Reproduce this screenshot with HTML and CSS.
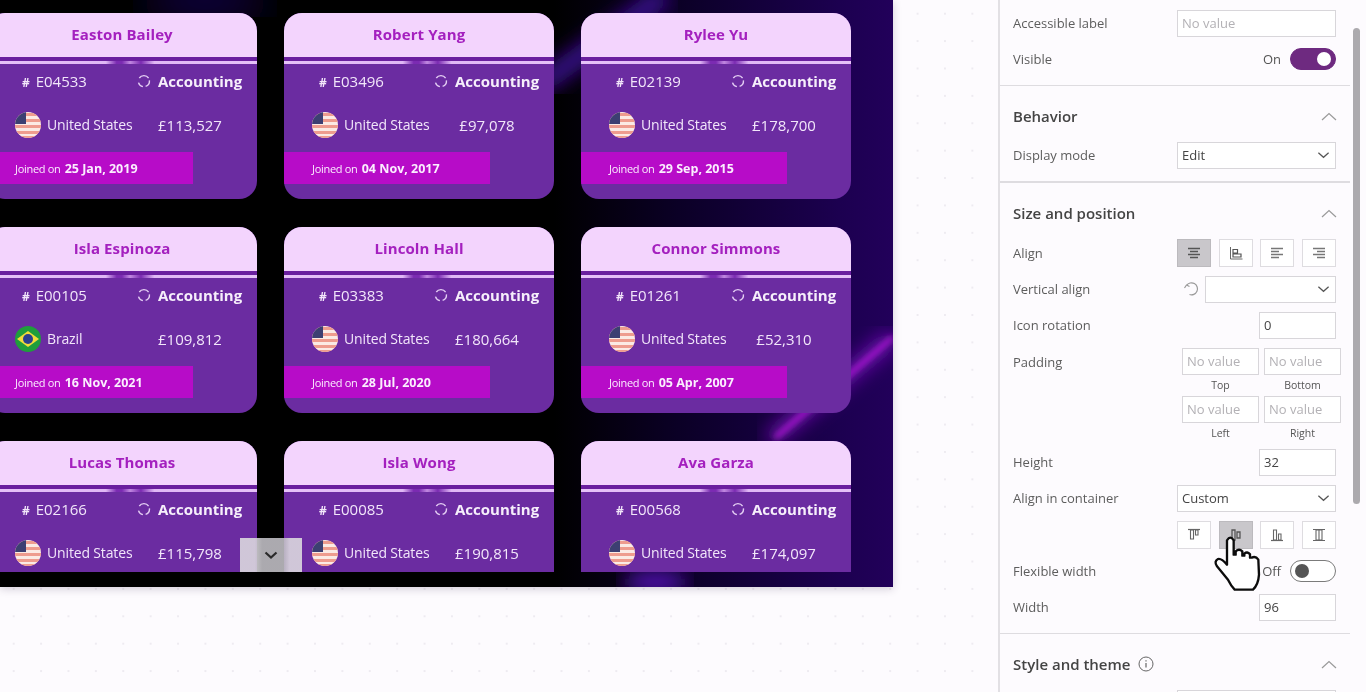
FILE: index.html
```html
<!DOCTYPE html>
<html lang="en">
<head>
<meta charset="utf-8">
<title>Employee cards</title>
<link rel="stylesheet" href="styles.css">
</head>
<body>
<svg class="defs" width="0" height="0" aria-hidden="true">
  <defs>
    <clipPath id="disc"><circle cx="13" cy="13" r="13"/></clipPath>
    <symbol id="us" viewBox="0 0 26 26">
      <g clip-path="url(#disc)">
        <rect width="26" height="26" fill="#fbeae4"/>
        <rect y="1" width="26" height="3" fill="#ee9c8e"/>
        <rect y="7" width="26" height="3" fill="#ee9c8e"/>
        <rect y="13" width="26" height="3" fill="#ee9c8e"/>
        <rect y="19" width="26" height="3" fill="#ee9c8e"/>
        <rect y="24" width="26" height="2" fill="#ee9c8e"/>
        <rect width="11" height="12" fill="#3c3f72"/>
      </g>
    </symbol>
    <symbol id="br" viewBox="0 0 26 26">
      <g clip-path="url(#disc)">
        <rect width="26" height="26" fill="#1f9e3c"/>
        <path d="M13 5 24 13 13 21 2 13Z" fill="#f2dc3a"/>
        <circle cx="13" cy="13" r="5" fill="#2c3f8f"/>
      </g>
    </symbol>
    <symbol id="spin" viewBox="0 0 14 14">
      <path d="M11.6 4.2A5.6 5.6 0 0 0 2.3 4M1.5 8.6a5.6 5.6 0 0 0 4.4 4M8.6 12.4a5.6 5.6 0 0 0 3.8-6" fill="none" stroke="#e3cdf3" stroke-width="1.4"/>
    </symbol>
    <symbol id="chev" viewBox="0 0 14 8">
      <path d="M1.5 1.5 7 6.5 12.5 1.5" fill="none" stroke="#555" stroke-width="1.3"/>
    </symbol>
    <symbol id="chevbold" viewBox="0 0 14 8">
      <path d="M1.5 1.5 7 6.5 12.5 1.5" fill="none" stroke="#2a2a2a" stroke-width="2.2"/>
    </symbol>
    <symbol id="chevup" viewBox="0 0 16 9">
      <path d="M1 8 8 1.5 15 8" fill="none" stroke="#9a9a9a" stroke-width="1.2"/>
    </symbol>
  </defs>
</svg>

<div class="app">
  <main class="stage">
    <section class="canvas">
      <svg class="glow" viewBox="0 0 893 587" preserveAspectRatio="none" aria-hidden="true">
        <defs>
          <filter id="b3"><feGaussianBlur stdDeviation="3"/></filter>
          <filter id="b10"><feGaussianBlur stdDeviation="10"/></filter>
          <filter id="b22"><feGaussianBlur stdDeviation="22"/></filter>
        </defs>
        <path d="M540 85 665 -5" stroke="#3e0e96" stroke-width="20" filter="url(#b10)"/>
        <path d="M893 337 770 440" stroke="#8a18d0" stroke-width="12" filter="url(#b10)"/>
        <path d="M893 337 775 438" stroke="#c31ee6" stroke-width="4" filter="url(#b3)"/>
        <ellipse cx="655" cy="582" rx="32" ry="10" fill="#5a12c0" filter="url(#b10)"/>
        <ellipse cx="205" cy="0" rx="60" ry="14" fill="#1c0a66" filter="url(#b22)"/>
      </svg>
      <div class="grid">

        <article class="card">
          <h2 class="name">Easton Bailey</h2>
          <div class="rule"></div>
          <div class="row-a"><span class="id"><i>#</i> E04533</span><svg class="spin"><use href="#spin"/></svg><b class="dept">Accounting</b></div>
          <div class="row-b"><span class="place"><svg class="flag"><use href="#us"/></svg>United States</span><span class="pay">£113,527</span></div>
          <div class="joined"><small>Joined on</small> <b>25 Jan, 2019</b></div>
        </article>
        <article class="card">
          <h2 class="name">Robert Yang</h2>
          <div class="rule"></div>
          <div class="row-a"><span class="id"><i>#</i> E03496</span><svg class="spin"><use href="#spin"/></svg><b class="dept">Accounting</b></div>
          <div class="row-b"><span class="place"><svg class="flag"><use href="#us"/></svg>United States</span><span class="pay">£97,078</span></div>
          <div class="joined"><small>Joined on</small> <b>04 Nov, 2017</b></div>
        </article>
        <article class="card">
          <h2 class="name">Rylee Yu</h2>
          <div class="rule"></div>
          <div class="row-a"><span class="id"><i>#</i> E02139</span><svg class="spin"><use href="#spin"/></svg><b class="dept">Accounting</b></div>
          <div class="row-b"><span class="place"><svg class="flag"><use href="#us"/></svg>United States</span><span class="pay">£178,700</span></div>
          <div class="joined"><small>Joined on</small> <b>29 Sep, 2015</b></div>
        </article>

        <article class="card">
          <h2 class="name">Isla Espinoza</h2>
          <div class="rule"></div>
          <div class="row-a"><span class="id"><i>#</i> E00105</span><svg class="spin"><use href="#spin"/></svg><b class="dept">Accounting</b></div>
          <div class="row-b"><span class="place"><svg class="flag"><use href="#br"/></svg>Brazil</span><span class="pay">£109,812</span></div>
          <div class="joined"><small>Joined on</small> <b>16 Nov, 2021</b></div>
        </article>
        <article class="card">
          <h2 class="name">Lincoln Hall</h2>
          <div class="rule"></div>
          <div class="row-a"><span class="id"><i>#</i> E03383</span><svg class="spin"><use href="#spin"/></svg><b class="dept">Accounting</b></div>
          <div class="row-b"><span class="place"><svg class="flag"><use href="#us"/></svg>United States</span><span class="pay">£180,664</span></div>
          <div class="joined"><small>Joined on</small> <b>28 Jul, 2020</b></div>
        </article>
        <article class="card">
          <h2 class="name">Connor Simmons</h2>
          <div class="rule"></div>
          <div class="row-a"><span class="id"><i>#</i> E01261</span><svg class="spin"><use href="#spin"/></svg><b class="dept">Accounting</b></div>
          <div class="row-b"><span class="place"><svg class="flag"><use href="#us"/></svg>United States</span><span class="pay">£52,310</span></div>
          <div class="joined"><small>Joined on</small> <b>05 Apr, 2007</b></div>
        </article>

        <article class="card">
          <h2 class="name">Lucas Thomas</h2>
          <div class="rule"></div>
          <div class="row-a"><span class="id"><i>#</i> E02166</span><svg class="spin"><use href="#spin"/></svg><b class="dept">Accounting</b></div>
          <div class="row-b"><span class="place"><svg class="flag"><use href="#us"/></svg>United States</span><span class="pay">£115,798</span></div>
        </article>
        <article class="card">
          <h2 class="name">Isla Wong</h2>
          <div class="rule"></div>
          <div class="row-a"><span class="id"><i>#</i> E00085</span><svg class="spin"><use href="#spin"/></svg><b class="dept">Accounting</b></div>
          <div class="row-b"><span class="place"><svg class="flag"><use href="#us"/></svg>United States</span><span class="pay">£190,815</span></div>
        </article>
        <article class="card">
          <h2 class="name">Ava Garza</h2>
          <div class="rule"></div>
          <div class="row-a"><span class="id"><i>#</i> E00568</span><svg class="spin"><use href="#spin"/></svg><b class="dept">Accounting</b></div>
          <div class="row-b"><span class="place"><svg class="flag"><use href="#us"/></svg>United States</span><span class="pay">£174,097</span></div>
        </article>
      </div>
      <div class="pager"><svg class="pager-chev"><use href="#chevbold"/></svg></div>
    </section>
  </main>

  <aside class="panel">
    <div class="scroll-thumb"></div>
    <section class="group first">
      <div class="prow"><label>Accessible label</label><div class="field wide ph">No value</div></div>
      <div class="prow"><label>Visible</label><div class="switch-wrap"><span class="state">On</span><span class="switch on"><span class="knob"></span></span></div></div>
    </section>
    <section class="group behavior">
      <div class="ghead"><h3>Behavior</h3><svg class="up"><use href="#chevup"/></svg></div>
      <div class="prow"><label>Display mode</label><div class="field wide select">Edit<svg class="down"><use href="#chev"/></svg></div></div>
    </section>
    <section class="group sizing">
      <div class="ghead"><h3>Size and position</h3><svg class="up"><use href="#chevup"/></svg></div>
      <div class="prow"><label>Align</label>
        <div class="tools">
          <span class="tool active"><svg viewBox="0 0 16 16"><path d="M2 3.5h12M4 6.5h8M2 9.5h12M4 12.5h8" stroke="#555" stroke-width="1.5"/></svg></span>
          <span class="tool"><svg viewBox="0 0 16 16"><path d="M2.5 2v12h12" fill="none" stroke="#666" stroke-width="1"/><path d="M5 4.5h4.5v3.5H5zM5 9h8v3H5z" fill="none" stroke="#555" stroke-width="1.2"/></svg></span>
          <span class="tool"><svg viewBox="0 0 16 16"><path d="M2 3.5h12M2 6.5h8M2 9.5h12M2 12.5h8" stroke="#777" stroke-width="1.3"/></svg></span>
          <span class="tool"><svg viewBox="0 0 16 16"><path d="M2 3.5h12M6 6.5h8M2 9.5h12M6 12.5h8" stroke="#777" stroke-width="1.3"/></svg></span>
        </div>
      </div>
      <div class="prow"><label>Vertical align</label>
        <div class="vert"><svg class="reset" viewBox="0 0 16 16"><path d="M3.5 4.5A6 6 0 1 1 6.5 13.5M1.5 7 3.5 4l3 1.5" fill="none" stroke="#9a9a9a" stroke-width="1.2"/></svg><div class="field mid select"><svg class="down"><use href="#chev"/></svg></div></div>
      </div>
      <div class="prow"><label>Icon rotation</label><div class="field narrow">0</div></div>
      <div class="pad-block">
        <label>Padding</label>
        <div class="pad-grid">
          <div class="field pad ph">No value</div><div class="field pad ph">No value</div>
          <span class="cap">Top</span><span class="cap">Bottom</span>
          <div class="field pad ph">No value</div><div class="field pad ph">No value</div>
          <span class="cap">Left</span><span class="cap">Right</span>
        </div>
      </div>
      <div class="prow"><label>Height</label><div class="field narrow">32</div></div>
      <div class="prow"><label>Align in container</label><div class="field wide select">Custom<svg class="down"><use href="#chev"/></svg></div></div>
      <div class="prow end tall">
        <div class="tools">
          <span class="tool"><svg viewBox="0 0 16 16"><path d="M2 2.5h12" stroke="#666" stroke-width="1.2"/><path d="M4.5 3h3v9h-3zM9.5 3h2.5v5H9.5z" fill="none" stroke="#666" stroke-width="1.1"/></svg></span>
          <span class="tool active"><svg viewBox="0 0 16 16"><path d="M4 3h3v10H4zM9 5h3v6H9z" fill="none" stroke="#555" stroke-width="1.3"/></svg></span>
          <span class="tool"><svg viewBox="0 0 16 16"><path d="M2 13.5h12" stroke="#666" stroke-width="1.2"/><path d="M4.5 3h3v10h-3zM9.5 7h2.5v6H9.5z" fill="none" stroke="#666" stroke-width="1.1"/></svg></span>
          <span class="tool"><svg viewBox="0 0 16 16"><path d="M2 2.5h12M2 13.5h12" stroke="#666" stroke-width="1.2"/><path d="M5 3h6v10H5zM8 3v10" fill="none" stroke="#666" stroke-width="1.1"/></svg></span>
        </div>
      </div>
      <div class="prow"><label>Flexible width</label><div class="switch-wrap"><span class="state">Off</span><span class="switch"><span class="knob"></span></span></div></div>
      <div class="prow"><label>Width</label><div class="field narrow">96</div></div>
    </section>
    <section class="group last">
      <div class="ghead"><h3>Style and theme <svg class="info" viewBox="0 0 16 16"><circle cx="8" cy="8" r="7" fill="none" stroke="#666" stroke-width="1"/><path d="M8 7v4.5M8 4.2v1.4" stroke="#666" stroke-width="1.2"/></svg></h3><svg class="up"><use href="#chevup"/></svg></div>
      <div class="prow"><label></label><div class="field wide"></div></div>
    </section>
    <svg class="hand" viewBox="130 70 150 180" aria-hidden="true">
      <path d="M172 92Q182 76 192 92L192 135 198 135 198 125Q208 115 218 125L218 138 224 138 224 132Q233 124 241 134L241 144 246 144Q258 138 266 150L268 195Q266 225 250 240L195 240Q185 230 175 210L142 170Q132 155 145 148 155 145 172 165Z" fill="#fff" stroke="#0c0c0c" stroke-width="7" stroke-linejoin="round"/>
    </svg>
  </aside>
</div>
</body>
</html>
```

FILE: styles.css
```css
* { box-sizing: border-box; }
html, body { margin: 0; height: 692px; overflow: hidden; }
body { background: #fdfbfe; font-family: "Open Sans", "Noto Sans", sans-serif; color: #5a5a5a; }
.defs { position: absolute; }

.app { display: flex; height: 692px; filter: blur(0.35px); }

/* Stage */
.stage {
  flex: 0 0 998px;
  height: 692px;
  background-color: #fdfbfe;
  background-image: radial-gradient(circle, #eeebf1 0.8px, transparent 1.2px);
  background-size: 27.4px 27.4px;
}
.canvas {
  position: relative;
  width: 893px;
  height: 587px;
  overflow: hidden;
  background: linear-gradient(90deg, #000 0, #000 62%, #0b0026 76%, #1c0050 94%, #22005a 100%);
  box-shadow: 0 2px 8px rgba(60, 40, 80, .22);
}
.glow { position: absolute; inset: 0; width: 100%; height: 100%; }
.grid {
  position: relative;
  height: 572px;
  overflow: hidden;
  padding-top: 12.5px;
  margin-left: -13px;
  display: grid;
  grid-template-columns: repeat(3, 270px);
  grid-auto-rows: 186px;
  column-gap: 27px;
  row-gap: 28px;
}

/* Card */
.card { background: #6b2ca1; border-radius: 18px; overflow: hidden; color: #f2e6fa; }
.name {
  margin: 0;
  height: 44px;
  line-height: 42px;
  text-align: center;
  background: #f3d4fd;
  color: #a420bf;
  font-size: 15px;
  font-weight: 700;
  letter-spacing: .1px;
}
.rule {
  height: 7px;
  border-top: 4px solid #6a1f9f;
  background: linear-gradient(90deg, #e6c2f8 0, #e0b8f5 44%, #7b2bb2 48%, #7b2bb2 50%, #c088e0 53%, #7b2bb2 57%, #e0b8f5 62%, #e6c2f8 100%);
}
.row-a, .row-b { display: flex; align-items: center; font-size: 15px; }
.row-a { height: 34px; }
.row-b { height: 54px; }
.id { width: 150px; padding-left: 35px; white-space: nowrap; }
.id i { font-style: normal; font-size: 12px; font-weight: 700; margin-right: 2px; }
.spin { width: 14px; height: 14px; flex: none; margin-right: 7px; }
.dept { font-weight: 700; color: #f6effb; font-size: 15px; letter-spacing: 0; }
.place { width: 160px; padding-left: 28px; display: flex; align-items: center; gap: 6px; font-size: 14px; letter-spacing: -.15px; white-space: nowrap; }
.flag { width: 26px; height: 26px; flex: none; }
.pay { width: 86px; text-align: center; }
.joined {
  width: 206px;
  height: 32px;
  line-height: 30px;
  padding-left: 28px;
  background: #b70cc8;
  color: #fbeefe;
  white-space: nowrap;
}
.joined small { font-size: 11px; letter-spacing: -.3px; }
.joined b { font-size: 12.5px; font-weight: 700; }

.pager {
  position: absolute;
  left: 240px;
  top: 538px;
  width: 62px;
  height: 34px;
  background: linear-gradient(90deg, rgba(222,220,224,.88) 0, rgba(222,220,224,.88) 24%, rgba(190,188,194,.9) 36%, rgba(190,188,194,.9) 70%, rgba(222,220,224,.88) 80%);
  display: flex;
  align-items: center;
  justify-content: center;
}
.pager-chev { width: 14px; height: 8px; }

/* Property panel */
.panel {
  position: relative;
  flex: 1;
  height: 692px;
  overflow: hidden;
  background: #fdfbfe;
  border-left: 2px solid #e2e0e4;
  padding-top: 5px;
}
.scroll-thumb {
  position: absolute;
  left: 353px;
  top: 28px;
  width: 7px;
  height: 476px;
  border-radius: 4px;
  background: #acaaae;
}
.group { width: 350px; padding: 0 14px 8px 13px; border-bottom: 1px solid #dedce0; }
.group.behavior { border-bottom-width: 2px; }
.group.last { border-bottom: 0; }
.ghead { display: flex; align-items: center; justify-content: space-between; height: 36px; margin: 12px 0 3px; }
.sizing .ghead { margin-bottom: 4px; }
.ghead h3 { margin: 0; font-size: 15px; font-weight: 600; color: #444; display: flex; align-items: center; gap: 8px; }
.up { width: 16px; height: 9px; margin-right: -1px; }
.prow { display: flex; align-items: center; justify-content: space-between; height: 36px; font-size: 13px; }
.prow.end { justify-content: flex-end; }
.prow.tall { height: 37px; }
label { color: #5d5d5d; }
.field {
  height: 27px;
  border: 1px solid #d8d6da;
  background: #fff;
  font-size: 13px;
  line-height: 24px;
  padding-left: 4px;
  color: #444;
}
.ph { color: #b3b1b5; }
.wide { width: 159px; }
.mid { flex: 1; }
.narrow { width: 77px; }
.select { display: flex; align-items: center; justify-content: space-between; padding-right: 5px; }
.down { width: 13px; height: 8px; margin-left: auto; }
.switch-wrap { display: flex; align-items: center; gap: 9px; }
.state { color: #555; }
.switch { width: 46px; height: 22px; border-radius: 11px; border: 1px solid #7b7b7b; background: #fff; display: flex; align-items: center; padding: 0 4px; }
.switch .knob { width: 14px; height: 14px; border-radius: 50%; background: #555; }
.switch.on { background: #6e2a80; border-color: #6e2a80; justify-content: flex-end; }
.switch.on .knob { background: #fff; }
.tools { display: flex; justify-content: space-between; width: 159px; }
.tool { width: 34px; height: 28px; background: #fff; border: 1px solid #dedce0; display: flex; align-items: center; justify-content: center; }
.tool svg { width: 16px; height: 16px; }
.tool.active { background: #c9c7cb; border-color: #bcbabe; }
.vert { display: flex; align-items: center; gap: 6px; width: 159px; padding-left: 6px; }
.reset { width: 16px; height: 16px; flex: none; }
.pad-block { position: relative; height: 101px; display: flex; justify-content: space-between; font-size: 13px; }
.pad-block label { padding-top: 10px; }
.pad-grid {
  margin-right: -5px;
  padding-top: 5px;
  display: grid;
  grid-template-columns: 77px 77px;
  column-gap: 5px;
  grid-template-rows: 27px 21px 27px 21px;
  height: 101px;
}
.pad { width: 77px; height: 27px; }
.cap { text-align: center; font-size: 10.5px; line-height: 21px; color: #555; }
.info { width: 16px; height: 16px; }
.hand { position: absolute; left: 213px; top: 533px; width: 50px; height: 60px; }
```
